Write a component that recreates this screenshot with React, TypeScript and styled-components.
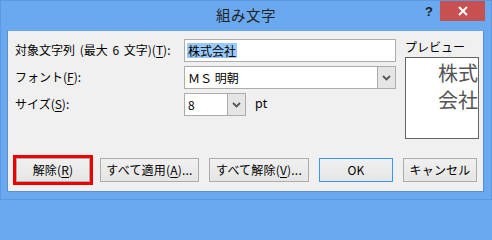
import React from 'react';
import styled, { createGlobalStyle } from 'styled-components';

const GlobalStyle = createGlobalStyle`
  html, body {
    margin: 0;
    padding: 0;
    background: #6aa9f0;
  }
  body {
    font-family: "Noto Sans CJK JP", "Noto Sans", sans-serif;
    font-size: 12px;
    color: #000;
  }
`;

const Window = styled.div`
  width: 492px;
  height: 200px;
  box-sizing: border-box;
  background: #6aa9f0;
  border: 1px solid #5a98e0;
  display: flex;
  flex-direction: column;
`;

const TitleBar = styled.div`
  height: 29px;
  display: flex;
  align-items: flex-start;
  position: relative;
`;

const Title = styled.div`
  flex: 1;
  text-align: center;
  font-size: 14.5px;
  line-height: 28px;
  color: #222;
  letter-spacing: 0.5px;
`;

const Help = styled.div`
  position: absolute;
  right: 58px;
  top: 3px;
  font-family: "Liberation Sans", sans-serif;
  font-weight: bold;
  font-size: 13px;
  color: #222;
`;

const CloseButton = styled.div`
  position: absolute;
  right: 6px;
  top: 0;
  width: 45px;
  height: 20px;
  background: #c75050;
  display: flex;
  align-items: center;
  justify-content: center;
`;

const Body = styled.div`
  margin: 0 7px 7px 6px;
  flex: 1;
  background: #f0f0f0;
  border: 1px solid #5a8fd0;
  border-top-color: #6aa9f0;
  padding: 8px 0 0 7px;
  box-sizing: border-box;
  display: flex;
  flex-direction: column;
`;

const Top = styled.div`
  display: flex;
  gap: 9px;
`;

const Form = styled.div`
  display: grid;
  grid-template-columns: 169px 212px;
  grid-auto-rows: 23px;
  row-gap: 4px;
  align-items: center;
`;

const Label = styled.div`
  white-space: pre;
  word-spacing: 2px;
  line-height: 16px;
  padding-bottom: 2px;
`;

const Key = styled.span`
  text-decoration: underline;
  text-underline-offset: 2px;
`;

const TextBox = styled.div`
  height: 23px;
  box-sizing: border-box;
  border: 1px solid #abadb3;
  background: #fff;
  display: flex;
  align-items: center;
  padding-left: 2px;
`;

const Selected = styled.span`
  background: #99c9f9;
  line-height: 15px;
  padding: 0 1px;
`;

const Combo = styled.div<{ $width?: number }>`
  height: 23px;
  width: ${(p) => (p.$width ? `${p.$width}px` : 'auto')};
  box-sizing: border-box;
  border: 1px solid #acacac;
  background: #fff;
  display: flex;
  align-items: stretch;
`;

const ComboText = styled.div`
  flex: 1;
  display: flex;
  align-items: center;
  padding-left: 3px;
  white-space: pre;
`;

const DropButton = styled.div`
  width: 17px;
  background: #e5e5e5;
  border-left: 1px solid #acacac;
  display: flex;
  align-items: center;
  justify-content: center;
`;

const SizeRow = styled.div`
  display: flex;
  align-items: center;
  gap: 9px;
`;

const Unit = styled.span`
  font-family: "Noto Sans", sans-serif;
  font-size: 12.5px;
  padding-bottom: 2px;
`;

const Preview = styled.div`
  display: flex;
  flex-direction: column;
  width: 74px;
`;

const PreviewLabel = styled.div`
  height: 19px;
  line-height: 17px;
  margin-top: -1px;
`;

const PreviewBox = styled.div`
  height: 82px;
  box-sizing: border-box;
  border: 1px solid #646464;
  background: #fff;
  text-align: right;
  font-size: 20px;
  line-height: 27px;
  color: #555;
  padding-top: 1px;
  margin-right: 0;
  overflow: hidden;
`;

const Buttons = styled.div`
  margin-top: auto;
  margin-bottom: 9px;
  padding-left: 1px;
  display: flex;
  gap: 10px;
`;

const Button = styled.button<{ $width: number; $default?: boolean; $marked?: boolean }>`
  width: ${(p) => p.$width}px;
  height: 24px;
  box-sizing: border-box;
  padding: 0;
  font-family: inherit;
  font-size: 12px;
  color: #000;
  background: linear-gradient(#f0f0f0, #e5e5e5);
  border: 1px solid ${(p) => (p.$default ? '#3399ff' : '#acacac')};
  outline: ${(p) => (p.$marked ? '3px solid #ee0000' : 'none')};
  outline-offset: 0;
  line-height: 20px;
  letter-spacing: 0.2px;
`;

const Chevron = () => (
  <svg width="9" height="6" viewBox="0 0 9 6">
    <path d="M1 1 L4.5 4.5 L8 1" fill="none" stroke="#555" strokeWidth="1.8" />
  </svg>
);

export default function App() {
  return (
    <>
      <GlobalStyle />
      <Window>
        <TitleBar>
          <Title>組み文字</Title>
          <Help>?</Help>
          <CloseButton>
            <svg width="10" height="10" viewBox="0 0 10 10">
              <path d="M1 1 L9 9 M9 1 L1 9" stroke="#fff" strokeWidth="2" />
            </svg>
          </CloseButton>
        </TitleBar>
        <Body>
          <Top>
            <Form>
              <Label>
                対象文字列 (最大 6 文字)(<Key>T</Key>):
              </Label>
              <TextBox>
                <Selected>株式会社</Selected>
              </TextBox>
              <Label>
                フォント(<Key>F</Key>):
              </Label>
              <Combo>
                <ComboText>ＭＳ 明朝</ComboText>
                <DropButton>
                  <Chevron />
                </DropButton>
              </Combo>
              <Label>
                サイズ(<Key>S</Key>):
              </Label>
              <SizeRow>
                <Combo $width={62}>
                  <ComboText>8</ComboText>
                  <DropButton>
                    <Chevron />
                  </DropButton>
                </Combo>
                <Unit>pt</Unit>
              </SizeRow>
            </Form>
            <Preview>
              <PreviewLabel>プレビュー</PreviewLabel>
              <PreviewBox>
                株式
                <br />
                会社
              </PreviewBox>
            </Preview>
          </Top>
          <Buttons>
            <Button $width={74} $marked>
              解除(<Key>R</Key>)
            </Button>
            <Button $width={99}>
              すべて適用(<Key>A</Key>)...
            </Button>
            <Button $width={100}>
              すべて解除(<Key>V</Key>)...
            </Button>
            <Button $width={74} $default>
              OK
            </Button>
            <Button $width={74}>キャンセル</Button>
          </Buttons>
        </Body>
      </Window>
    </>
  );
}
